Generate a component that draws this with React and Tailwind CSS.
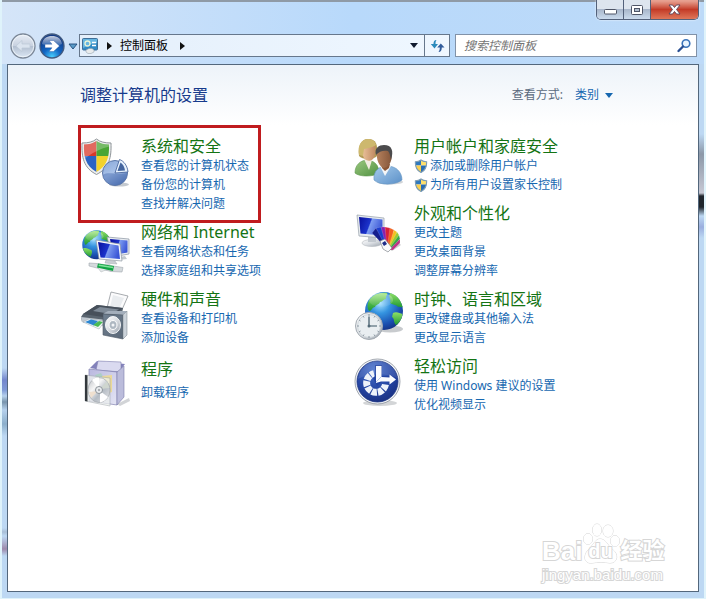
import React from 'react';

function Gradients() {
  return (
    <svg width="0" height="0" className="absolute" aria-hidden="true">
      <defs>
        <radialGradient id="globe" cx="0.4" cy="0.3" r="0.75">
          <stop offset="0" stopColor="#a4e0ff" />
          <stop offset="0.35" stopColor="#3594e0" />
          <stop offset="0.75" stopColor="#1a4fb0" />
          <stop offset="1" stopColor="#152f80" />
        </radialGradient>
        <linearGradient id="land" x1="0" y1="0" x2="0" y2="1">
          <stop offset="0" stopColor="#8fe066" />
          <stop offset="1" stopColor="#209a34" />
        </linearGradient>
        <linearGradient id="screen" x1="0" y1="0.2" x2="1" y2="0.5">
          <stop offset="0" stopColor="#0a12a0" />
          <stop offset="0.45" stopColor="#1c34cc" />
          <stop offset="0.5" stopColor="#7d9cf0" />
          <stop offset="1" stopColor="#3a55d6" />
        </linearGradient>
        <linearGradient id="silver" x1="0" y1="0" x2="1" y2="1">
          <stop offset="0" stopColor="#ffffff" />
          <stop offset="0.5" stopColor="#d9dde2" />
          <stop offset="1" stopColor="#9aa2ac" />
        </linearGradient>
        <linearGradient id="disc" x1="0" y1="0" x2="1" y2="1">
          <stop offset="0" stopColor="#b9bdc2" />
          <stop offset="0.35" stopColor="#f6f6f6" />
          <stop offset="0.6" stopColor="#b5bcc4" />
          <stop offset="1" stopColor="#e8e8ea" />
        </linearGradient>
        <linearGradient id="speaker" x1="0" y1="0" x2="1" y2="1">
          <stop offset="0" stopColor="#6f7f90" />
          <stop offset="1" stopColor="#5b6877" />
        </linearGradient>
        <linearGradient id="pie" x1="0" y1="0" x2="0.6" y2="1">
          <stop offset="0" stopColor="#86a6d8" />
          <stop offset="0.55" stopColor="#a9c2e8" />
          <stop offset="1" stopColor="#4e70b0" />
        </linearGradient>
        <linearGradient id="green" x1="0" y1="0" x2="1" y2="1">
          <stop offset="0" stopColor="#9cc980" />
          <stop offset="1" stopColor="#4f9040" />
        </linearGradient>
        <linearGradient id="blue" x1="0" y1="0" x2="1" y2="1">
          <stop offset="0" stopColor="#a6cbec" />
          <stop offset="1" stopColor="#5b90c8" />
        </linearGradient>
        <linearGradient id="skin" x1="0" y1="0" x2="1" y2="0">
          <stop offset="0" stopColor="#e9c09a" />
          <stop offset="1" stopColor="#c08a62" />
        </linearGradient>
        <linearGradient id="brown" x1="0" y1="0" x2="1" y2="0">
          <stop offset="0" stopColor="#b5805c" />
          <stop offset="1" stopColor="#84563a" />
        </linearGradient>
        <radialGradient id="access" cx="0.4" cy="0.2" r="0.85">
          <stop offset="0" stopColor="#4d74cc" />
          <stop offset="0.6" stopColor="#2444a2" />
          <stop offset="1" stopColor="#192f80" />
        </radialGradient>
        <linearGradient id="box" x1="0" y1="0" x2="1" y2="1">
          <stop offset="0" stopColor="#b9b8df" />
          <stop offset="1" stopColor="#e4e5f4" />
        </linearGradient>
        <radialGradient id="forward" cx="0.5" cy="0.95" r="0.8">
          <stop offset="0" stopColor="#49d0ff" />
          <stop offset="0.45" stopColor="#1367c4" />
          <stop offset="1" stopColor="#123a86" />
        </radialGradient>
        <linearGradient id="back" x1="0" y1="0" x2="0" y2="1">
          <stop offset="0" stopColor="#e9eff7" />
          <stop offset="0.48" stopColor="#c9d2e0" />
          <stop offset="0.52" stopColor="#b4c0d1" />
          <stop offset="1" stopColor="#dce8f5" />
        </linearGradient>
        <linearGradient id="gloss" x1="0" y1="0" x2="0" y2="1">
          <stop offset="0" stopColor="#ffffff" stopOpacity="0.75" />
          <stop offset="1" stopColor="#ffffff" stopOpacity="0.1" />
        </linearGradient>
        <clipPath id="shieldShape">
          <path d="M15.500 3C12 5.500 8 6.500 3 6.500C2.500 18 4.500 28 15.500 34C26.500 28 28.500 18 28 6.500C23 6.500 19 5.500 15.500 3Z" />
        </clipPath>
        <clipPath id="uacShape">
          <path d="M7 1C5 2.500 3 3 1 3C.7 8 2 12 7 14.500C12 12 13.300 8 13 3C11 3 9 2.500 7 1Z" />
        </clipPath>
      </defs>
    </svg>
  );
}

function Icon({ children }) {
  return (
    <svg className="size-12 shrink-0 overflow-visible" viewBox="0 0 48 48" aria-hidden="true">
      {children}
    </svg>
  );
}

function SecurityIcon() {
  return (
    <Icon>
      <path d="M15.500 1C12 4 7 5 1 5C.5 19 2.500 30 15.500 36.500C28.500 30 30.500 19 30 5C24 5 19 4 15.500 1Z" fill="#eceded" stroke="#8f9599" />
      <g clipPath="url(#shieldShape)">
        <rect width="15.500" height="18" fill="#d8382a" />
        <rect x="15.500" width="15" height="18" fill="#4aa535" />
        <rect y="18" width="15.500" height="20" fill="#2a63c4" />
        <rect x="15.500" y="18" width="15" height="20" fill="#f2d22c" />
        <path d="M0 0H30V8C20 10 8 16 0 24Z" fill="#fff" opacity="0.25" />
      </g>
      <ellipse cx="38" cy="46.500" rx="10" ry="2" fill="#7c8794" opacity="0.45" />
      <circle cx="34" cy="35" r="12.500" fill="url(#pie)" stroke="#5b77a8" />
      <path d="M22 37C28 33 36 38 46 35C46 43 40 47 34 47C28 47 23 43 22 37Z" fill="#5578b8" opacity="0.55" />
      <path d="M34 35L38.500 21.500C43 23 46.500 28 47 34Z" fill="#e6f1fd" stroke="#3d5c96" strokeWidth="0.800" />
      <path d="M36.500 33L39.500 24.500C42 26 43.500 29 44 32.500Z" fill="#44659f" />
    </Icon>
  );
}

function Globe() {
  return (
    <>
      <circle cx="20" cy="20" r="19" fill="url(#globe)" />
      <g fill="url(#land)">
        <path d="M6 8C10 3 16 1 23 2C24 4 21 5 22 8C19 8 19 11 16 11C15 14 12 13 11 16C8 16 8 20 5 20C3 17 3 12 6 8Z" />
        <path d="M2 25C6 23 9 26 13 27C15 30 13 33 12 36C7 34 3 30 2 25Z" />
        <path d="M26 2C33 4 37 9 38.500 16C37 17 36 15 34 16C32 13 28 14 26 12C28 9 24 7 26 2Z" />
        <path d="M29 22C32 20 36 22 38.500 23C38 28 35 32 32 34C29 31 31 28 28 26Z" />
      </g>
      <ellipse cx="17" cy="9" rx="12" ry="7" fill="url(#gloss)" opacity="0.5" />
    </>
  );
}

function NetworkIcon() {
  return (
    <Icon>
      <g transform="translate(0.500 5.500) scale(.76)"><Globe /></g>
      <path d="M26 13L48 15V30L31 33Z" fill="#e8ecf0" stroke="#8a94a0" strokeWidth="0.700" />
      <path d="M29 15L46.500 16.500V28.500L32 31Z" fill="url(#screen)" />
      <path d="M38 33L44 32L46 35L37 36Z" fill="#c2c8ce" />
      <path d="M15 16L39 20L41 37L18 35Z" fill="#f8fafb" stroke="#8c96a2" strokeWidth="0.700" />
      <path d="M17 18L37.500 21.500L39 35L19.500 33.500Z" fill="url(#screen)" />
      <path d="M25 36L34 37L36 40L24 39Z" fill="#c9ced4" stroke="#a2a8af" strokeWidth="0.500" />
      <path d="M8 39L16 39.500L42 43.500L41 48L30 47.500L8 42Z" fill="#d5dadd" stroke="#a1a8ae" strokeWidth="0.600" />
      <path d="M17 44L28 40L32 43L20 48Z" fill="#e3e7e9" stroke="#b0b6ba" strokeWidth="0.500" />
      <path d="M17 39.500L33 42L32 47L16 43.500Z" fill="#12a344" />
      <path d="M18 40.500L32 42.800V44.200L17.500 42Z" fill="#7fe39a" />
    </Icon>
  );
}

function HardwareIcon() {
  return (
    <Icon>
      <path d="M26 17L30 1L47 5L40 21Z" fill="#fbfbfc" stroke="#83888e" strokeWidth="0.700" />
      <path d="M32 4L43 7L38 18L29 16Z" fill="#e9ecef" />
      <path d="M0 26L2 23L16 14L42 17L40 27L28 35L1 31Z" fill="#59646f" />
      <path d="M2 23L16 14L42 17L29 27Z" fill="#47505b" />
      <path d="M12 20L19 16L38 18.500L30 23Z" fill="#7f8b98" />
      <path d="M0 26L26 29V36L1 31Z" fill="#c0c8d0" />
      <path d="M2 31L8 28L24 30L18 38Z" fill="#f4f7f9" stroke="#9da8b1" strokeWidth="0.500" />
      <path d="M4 31L10 28.500L17 30L13 34.500Z" fill="#2c86d0" />
      <path d="M12 34L18 30L22 31L17 36Z" fill="#4aba55" />
      <path d="M22 23L27 20L46 20L42 24Z" fill="#a3aebb" />
      <path d="M22 23L42 24V48L22 44Z" fill="url(#speaker)" stroke="#4d5966" strokeWidth="0.600" />
      <path d="M42 24L46 20V44L42 48Z" fill="#cbd2d9" stroke="#74808b" strokeWidth="0.500" />
      <ellipse cx="32" cy="34" rx="7.500" ry="8.500" fill="url(#silver)" stroke="#f2f4f6" />
      <ellipse cx="32" cy="34" rx="4" ry="4.500" fill="#aeb8c2" stroke="#fff" />
      <circle cx="32" cy="34" r="1.500" fill="#f4f6f8" />
    </Icon>
  );
}

function ProgramsIcon() {
  return (
    <Icon>
      <path d="M36 46L48 40L49 43L39 48Z" fill="#7e838c" opacity="0.35" />
      <path d="M9 10L16 3L44 6L37 15Z" fill="#8382bb" />
      <path d="M17 3L40 4V14L15 12Z" fill="#dadaf0" stroke="#807fb0" strokeWidth="0.600" />
      <path d="M8 11L36 14V47L8 43Z" fill="url(#box)" stroke="#8585b1" strokeWidth="0.700" />
      <path d="M36 14L43 8V39L36 47Z" fill="#bbbcdb" stroke="#7d7dab" strokeWidth="0.600" />
      <path d="M14 17L20 15L24 22L19 27Z" fill="#a5d1bd" opacity="0.8" />
      <path d="M21 18L31 17V34L25 36Z" fill="#ead99a" />
      <path d="M4 17L29 20V48L4 43Z" fill="#eff3ee" opacity="0.7" stroke="#9ca3a9" strokeWidth="0.700" />
      <path d="M4 17L6.500 17.300V43.500L4 43Z" fill="#33383d" />
      <ellipse cx="18" cy="32" rx="11" ry="12.500" fill="url(#disc)" stroke="#9ba0a5" strokeWidth="0.600" />
      <path d="M18 31L11 22C13 20 15 19.500 18 19.500Z" fill="#ffffff" />
      <path d="M19 33L27 39C25 42 22 44 19 44.500Z" fill="#ffffff" />
      <path d="M19 31L26 23L28.500 30Z" fill="#cfd6cf" />
      <path d="M17 33L8 34L10 40Z" fill="#efe0cf" />
      <circle cx="18" cy="32" r="3.500" fill="#eceff1" stroke="#8b9298" />
      <circle cx="18" cy="32" r="1.200" fill="#a9aeb2" />
    </Icon>
  );
}

function UsersIcon() {
  return (
    <Icon>
      <ellipse cx="36" cy="44" rx="13" ry="2.500" fill="#7e8790" opacity="0.35" />
      <path d="M1 35C1 27 6 23 12 22C20 22 25 27 25 35C20 39 5 39 1 35Z" fill="url(#green)" stroke="#5c964b" strokeWidth="0.600" />
      <path d="M10 21L15 32L18 22Z" fill="#f2ece0" />
      <path d="M5 18C4 8 7 1 14 1C22 1 24 6 23 18C20 22 8 22 5 18Z" fill="#b29a56" />
      <path d="M9 10C14 10 18 8 20 6C22 9 22 17 19 21C16 24 12 23 10 20C8 17 8 13 9 10Z" fill="url(#skin)" />
      <path d="M5 17C3 7 8 1 14 1C18 1 21 3 22 7C18 10 13 10 10 11L9 18Z" fill="#cdb86e" />
      <path d="M20 42C19 33 25 28 33 28C42 28 48 34 48 42C42 47 26 48 20 42Z" fill="url(#blue)" stroke="#6393c1" strokeWidth="0.600" />
      <path d="M26 28L31 38L37 28Z" fill="#f4f6f8" />
      <path d="M27 26H36L35 30L31 33L28 30Z" fill="#8b5635" />
      <path d="M23 14C24 8 36 7 37 14C39 21 36 29 30 30C25 29 22 21 23 14Z" fill="url(#brown)" />
      <path d="M22 17C20 10 25 7 30 7C38 7 40 13 37 22C36 18 36 15 34 13C30 12 25 13 22 17Z" fill="#4c4b4d" />
    </Icon>
  );
}

function AppearanceIcon() {
  return (
    <Icon>
      <ellipse cx="18" cy="38" rx="10" ry="3.500" fill="url(#silver)" stroke="#b5babf" strokeWidth="0.600" />
      <path d="M14 31L22 32V37H14Z" fill="#c2c8cf" />
      <path d="M3 10L30 13V33L5 31Z" fill="#e7ebef" stroke="#959fa9" strokeWidth="0.700" />
      <path d="M5 12L28.500 14.500V30.500L6.500 28.500Z" fill="url(#screen)" />
      <path d="M33 43L44 37L47 40L38 46Z" fill="#6e7074" opacity="0.35" />
      <g stroke="#fff" strokeOpacity="0.4" strokeWidth="0.400">
        <path d="M33 44L18 28L22 23L36 42Z" fill="#151e8e" />
        <path d="M33 44L22 23L27 22L36 42Z" fill="#1c3ccc" />
        <path d="M33 44L27 22L31 22L36 42Z" fill="#8a1fae" />
        <path d="M33 44L31 22L36 23L37 42Z" fill="#d8203a" />
        <path d="M33 44L36 23L40 25L37 42Z" fill="#f0611e" />
        <path d="M34 44L40 25L43 27L38 42Z" fill="#f4c01f" />
        <path d="M34 44L43 27L45 30L38 43Z" fill="#9ccc2e" />
        <path d="M35 44L45 30L46 34L38 44Z" fill="#35a848" />
        <path d="M35 45L46 34L46 38L39 45Z" fill="#c03486" />
      </g>
      <path d="M26 36L31 34L38 43L34 47L29 44Z" fill="#f8f9fa" stroke="#70767e" strokeWidth="0.600" />
      <path d="M28 38L31 36L33 39L30 41Z" fill="#1e2c88" />
    </Icon>
  );
}

function ClockIcon() {
  return (
    <Icon>
      <ellipse cx="36" cy="38" rx="13" ry="3.500" fill="#767d85" opacity="0.4" />
      <g transform="translate(10 0)"><Globe /></g>
      <circle cx="15" cy="35" r="13.500" fill="url(#silver)" stroke="#a3abb2" />
      <circle cx="15" cy="35" r="11.500" fill="#e9eef1" stroke="#c0c7cd" strokeWidth="0.600" />
      <path d="M15 25.500V35H23" fill="none" stroke="#3b5564" strokeWidth="1.200" />
      <path d="M15 23V25M15 45V47M3 35H5M25 35H27M9 25L10 26.500M21 25L20 26.500M5 29L6.500 30M25 29L23.500 30M5 41L6.500 40M25 41L23.500 40M9 45L10 43.500M21 45L20 43.500" stroke="#8b98a1" />
      <circle cx="15" cy="35" r="1.500" fill="#526977" />
    </Icon>
  );
}

function AccessIcon() {
  return (
    <Icon>
      <ellipse cx="26" cy="45" rx="17" ry="3" fill="#6c737c" opacity="0.3" />
      <circle cx="23.500" cy="23.500" r="22.500" fill="#f2f4f7" stroke="#8b929c" strokeWidth="0.800" />
      <circle cx="23.500" cy="23.500" r="20.500" fill="url(#access)" stroke="#1b3382" strokeWidth="0.800" />
      <path d="M31.500 26.500A9.500 9.500 0 1 1 20 15.600" fill="none" stroke="#eef2fa" strokeWidth="7" strokeDasharray="5.200 1" />
      <path d="M21 7H28V18H35V15L43 21L35 28V24H28L23 28L19 20L21 18Z" fill="#2444a2" />
      <path d="M22 8H27.500V19L35.500 19.500V16.500L42 21.500L35.500 26.500V23.500L27 23.500L22 25Z" fill="#fbfcff" />
      <path d="M22 24L27 19" stroke="#9fb2dc" strokeWidth="0.700" />
      <path d="M4 21C6 10 14 3 24 3C34 3 41 10 43.500 20C32 15 15 15 4 21Z" fill="#fff" opacity="0.1" />
    </Icon>
  );
}

function Shield() {
  return (
    <svg className="size-[14px] shrink-0" viewBox="0 0 14 15" aria-hidden="true">
      <g clipPath="url(#uacShape)">
        <path d="M0 0H7V7H0Z" fill="#2e78be" />
        <path d="M7 0H14V7H7Z" fill="#ffe06a" />
        <path d="M0 7H7V15H0Z" fill="#fbd04e" />
        <path d="M7 7H14V15H7Z" fill="#286db2" />
      </g>
      <path d="M7 1C5 2.500 3 3 1 3C.7 8 2 12 7 14.500C12 12 13.300 8 13 3C11 3 9 2.500 7 1Z" fill="none" stroke="#7d9cb4" strokeWidth="1.200" />
    </svg>
  );
}

const leftColumn = [
  { icon: SecurityIcon, title: '系统和安全', links: ['查看您的计算机状态', '备份您的计算机', '查找并解决问题'], marked: true },
  { icon: NetworkIcon, title: '网络和 Internet', links: ['查看网络状态和任务', '选择家庭组和共享选项'] },
  { icon: HardwareIcon, title: '硬件和声音', links: ['查看设备和打印机', '添加设备'] },
  { icon: ProgramsIcon, title: '程序', links: ['卸载程序'] },
];

const rightColumn = [
  { icon: UsersIcon, title: '用户帐户和家庭安全', links: ['添加或删除用户帐户', '为所有用户设置家长控制'], shielded: true },
  { icon: AppearanceIcon, title: '外观和个性化', links: ['更改主题', '更改桌面背景', '调整屏幕分辨率'] },
  { icon: ClockIcon, title: '时钟、语言和区域', links: ['更改键盘或其他输入法', '更改显示语言'] },
  { icon: AccessIcon, title: '轻松访问', links: ['使用 Windows 建议的设置', '优化视频显示'] },
];

function Category({ icon: Glyph, title, links, shielded, marked }) {
  return (
    <section className="relative flex gap-3">
      <div className="pt-0.5"><Glyph /></div>
      <div className="flex min-h-12 flex-col justify-center self-start whitespace-nowrap">
        <h2 className="text-base leading-5 text-[#147414]">
          <a href="#" className="hover:underline">{title}</a>
        </h2>
        <ul className={links.length === 1 ? 'pt-1' : ''}>
          {links.map((link) => (
            <li key={link} className="text-xs leading-[19px] text-[#1667b0]">
              <a href="#" className="flex items-center gap-0.5 hover:underline">
                {shielded && <Shield />}
                {link}
              </a>
            </li>
          ))}
        </ul>
      </div>
      {marked && <div className="pointer-events-none absolute -top-[11px] -left-[3px] h-[98px] w-[183px] border-3 border-[#c01c1f]" />}
    </section>
  );
}

function WindowControls() {
  return (
    <div className="flex h-5 overflow-hidden rounded-b-[5px] border border-t-0 border-[#53617a] shadow-[0_0_2px_#ffffff]">
      <button type="button" aria-label="最小化" className="flex w-[27px] items-center justify-center border-r border-[#53617a] bg-linear-to-b from-[#dde5ee] from-45% via-[#a9b7cb] via-50% to-[#cbdbed]">
        <svg width="13" height="6" viewBox="0 0 13 6" className="mt-1"><rect x="0.500" y="0.500" width="12" height="4.500" rx="1" fill="#fff" stroke="#4e5566" /></svg>
      </button>
      <button type="button" aria-label="最大化" className="flex w-[27px] items-center justify-center border-r border-[#53617a] bg-linear-to-b from-[#dde5ee] from-45% via-[#a9b7cb] via-50% to-[#cbdbed]">
        <svg width="12" height="10" viewBox="0 0 12 10">
          <rect x="0.500" y="0.500" width="11" height="9" rx="1" fill="#fff" stroke="#4e5566" />
          <rect x="3.500" y="3.500" width="5" height="3" fill="#b0bdcd" stroke="#4e5566" />
        </svg>
      </button>
      <button type="button" aria-label="关闭" className="flex w-[47px] items-center justify-center bg-linear-to-b from-[#e7a090] from-5% via-[#c33a27] via-50% to-[#df7659]">
        <svg width="13" height="11" viewBox="0 0 13 11">
          <path d="M1 1H4.500L6.500 3.500L8.500 1H12L8.500 5.500L12 10H8.500L6.500 7.500L4.500 10H1L4.500 5.500Z" fill="#fff" stroke="#57445a" strokeWidth="0.900" />
        </svg>
      </button>
    </div>
  );
}

function NavButtons() {
  return (
    <div className="flex items-center gap-[3px]">
      <button type="button" aria-label="后退">
        <svg width="26" height="26" viewBox="0 0 26 26">
          <circle cx="13" cy="13" r="12" fill="url(#back)" stroke="#7b8797" strokeWidth="1.300" />
          <circle cx="13" cy="13" r="10.800" fill="none" stroke="#f3f7fb" opacity="0.8" />
          <path d="M6 13L12 7.500V11H20V15H12V18.500Z" fill="#dbe4ef" stroke="#bcc8d7" strokeWidth="0.700" />
        </svg>
      </button>
      <button type="button" aria-label="前进">
        <svg width="26" height="26" viewBox="0 0 26 26">
          <circle cx="13" cy="13" r="12" fill="url(#forward)" stroke="#425b80" strokeWidth="1.300" />
          <path d="M3 11C4 5 8 3 13 3C18 3 22 5 23 11C17 14 9 14 3 11Z" fill="url(#gloss)" />
          <path d="M6 11.200H13L10 7.500H14.500L20.500 13L14.500 18.500H10L13 14.800H6Z" fill="#fff" stroke="#2451a0" strokeWidth="0.400" />
        </svg>
      </button>
      <button type="button" aria-label="最近的页面">
        <svg width="10" height="7" viewBox="0 0 10 7"><path d="M1 1H9L5 6Z" fill="#5b9cc8" stroke="#1f4a78" strokeWidth="0.900" /></svg>
      </button>
    </div>
  );
}

function AddressBar() {
  return (
    <div className="flex h-[23px] min-w-0 flex-1 items-center border border-[#66778c] bg-linear-to-r from-[#e4effb] to-[#eff7ff] pl-0.5">
      <svg width="17" height="16" viewBox="0 0 17 16" className="shrink-0" aria-hidden="true">
        <rect x="0.500" y="0.500" width="15" height="11.500" rx="1" fill="#318ac5" stroke="#3e6e98" />
        <path d="M1 1H15V5C9 5 6 8 1 10Z" fill="#7cc7ec" opacity="0.7" />
        <circle cx="5.500" cy="5.500" r="2.500" fill="none" stroke="#e8f3d5" strokeWidth="1.300" />
        <path d="M10 4.500H14M10 7.500H14" stroke="#fff" strokeWidth="1.400" />
        <path d="M4 12L7 10.500H10L12 12V14L9 15.500H6L4 14Z" fill="#e8ebed" stroke="#8c9aa5" strokeWidth="0.500" />
      </svg>
      <svg width="5" height="8" viewBox="0 0 5 8" className="ml-2 shrink-0" aria-hidden="true"><path d="M0 0L5 4L0 8Z" fill="#111" /></svg>
      <button type="button" className="ml-2 flex items-center gap-3 text-xs whitespace-nowrap text-black">
        控制面板
        <svg width="5" height="8" viewBox="0 0 5 8" aria-hidden="true"><path d="M0 0L5 4L0 8Z" fill="#111" /></svg>
      </button>
      <button type="button" aria-label="以前的位置" className="ml-auto flex h-full w-5 items-center justify-center">
        <svg width="8" height="5" viewBox="0 0 8 5"><path d="M0 0H8L4 5Z" fill="#101a2e" /></svg>
      </button>
      <button type="button" aria-label="刷新" className="flex h-full w-[25px] items-center justify-center border-l border-[#66778c]">
        <svg width="15" height="14" viewBox="0 0 15 14">
          <path d="M6.500 1C4 1 3.500 3 3.500 5H0.800L4.500 9.500L8 5H5.500C5.500 3.500 5.500 2.500 6.500 1Z" fill="#2c8bbc" />
          <path d="M8.500 13C11 13 11.800 11 11.800 8.500H14.500L10.800 4.500L7.200 8.500H9.800C9.800 10.500 9.500 11.800 8.500 13Z" fill="#315c9b" />
        </svg>
      </button>
    </div>
  );
}

function Watermark() {
  return (
    <div className="pointer-events-none absolute right-7 bottom-1.5 w-32 font-['Liberation_Sans','Noto_Sans_CJK_SC',sans-serif] text-white [-webkit-text-stroke:2px_#d6d6d6] [paint-order:stroke_fill]" aria-hidden="true">
      <div className="flex h-[42px] items-end text-[26px] leading-7 font-bold">
        <span>Bai</span>
        <span className="relative flex w-9 shrink-0 justify-center text-xl leading-7">
          <svg width="38" height="42" viewBox="0 0 38 42" className="absolute bottom-0 left-0" fill="#fff" stroke="#d6d6d6">
            <ellipse cx="6" cy="16" rx="4.500" ry="5.500" />
            <ellipse cx="15" cy="7" rx="4.500" ry="6" />
            <ellipse cx="26" cy="8" rx="5" ry="6" />
            <ellipse cx="33" cy="18" rx="4.500" ry="5.500" />
            <path d="M18 16C24 16 25 22 30 26C37 31 36 40 28 40C23 39 15 39 10 40C2 41 1 33 6 27C11 23 13 16 18 16Z" />
          </svg>
          <span className="relative">du</span>
        </span>
        <span className="ml-0.5 text-[22px] whitespace-nowrap">经验</span>
      </div>
      <div className="text-[15px] leading-5">jingyan.baidu.com</div>
    </div>
  );
}

export default function App() {
  return (
    <div className="flex min-h-screen flex-col border-x-2 border-b border-[#dff3fb] bg-[#bdd8f3] font-['Noto_Sans','Noto_Sans_CJK_SC',sans-serif]">
      <Gradients />
      <header className="border-t-2 border-[#8f9aa6] bg-linear-to-r from-[#d5e5f8] via-[#b8d9fb] to-[#bddaf8]">
        <div className="-mt-0.5 flex h-[34px] justify-end pr-[5px]">
          <WindowControls />
        </div>
        <div className="flex h-[30px] items-start pr-[7px] pl-2">
          <div className="flex h-6 items-center"><NavButtons /></div>
          <div className="ml-px flex min-w-0 flex-1"><AddressBar /></div>
          <label className="ml-[5px] flex h-[23px] w-[242px] items-center border border-[#8192a8] bg-white pr-1 pl-2">
            <input type="search" aria-label="搜索控制面板" placeholder="搜索控制面板" className="min-w-0 flex-1 bg-transparent text-xs italic outline-none placeholder:text-[#747474]" />
            <svg width="15" height="15" viewBox="0 0 15 15" aria-hidden="true">
              <circle cx="9" cy="5.500" r="3.800" fill="#e8f4ff" stroke="#3973ba" strokeWidth="1.600" />
              <path d="M6 8.500L1.500 13" stroke="#294f93" strokeWidth="2.300" strokeLinecap="round" />
            </svg>
          </label>
        </div>
      </header>
      <div className="flex flex-1 pb-1.5">
        <div className="w-[5px] bg-[linear-gradient(to_bottom,#bdd8f3_304px,#7387cd_316px,#7f9ad6_326px,#b6d1ed_332px,#7894ac_338px,#b6d1ed_346px,#8cafcb_360px,#bdd8f3_372px,#bdd8f3_464px,#a8bed6_468px,#bdd8f3_472px,#9d8aac_485px,#bdd8f3_492px)]" />
        <main className="relative flex-1 border border-[#53677c] bg-linear-to-b from-[#edf3f9] to-white to-[60px]">
          <div className="flex items-center justify-between pt-[18px] pr-[83px] pl-[72px]">
            <h1 className="text-base leading-6 text-[#173b8c]">调整计算机的设置</h1>
            <div className="flex items-center text-xs leading-6">
              <label htmlFor="view" className="text-[#5b6b7e]">查看方式:</label>
              <div className="relative ml-3 flex items-center">
                <select id="view" defaultValue="类别" className="w-10 appearance-none bg-transparent text-[#1667b0] outline-none">
                  <option>类别</option>
                </select>
                <svg width="8" height="5" viewBox="0 0 8 5" className="pointer-events-none absolute right-0.5" aria-hidden="true"><path d="M0 0H8L4 5Z" fill="#1667b0" /></svg>
              </div>
            </div>
          </div>
          <div className="grid grid-cols-[273px_1fr] pt-[29px] pl-[73px]">
            <div className="flex flex-col gap-[9px]">
              {leftColumn.map((item) => <Category key={item.title} {...item} />)}
            </div>
            <div className="flex flex-col gap-[9px]">
              {rightColumn.map((item) => <Category key={item.title} {...item} />)}
            </div>
          </div>
          <Watermark />
        </main>
        <div className="w-[5px] bg-[linear-gradient(to_bottom,#bdd8f3_70px,#8c98a8_90px,#c6c8d4_129px,#20262d_132px,#20262d_143px,#bdd8f3_152px,#9aaede_163px,#bdd8f3_174px)]" />
      </div>
    </div>
  );
}
